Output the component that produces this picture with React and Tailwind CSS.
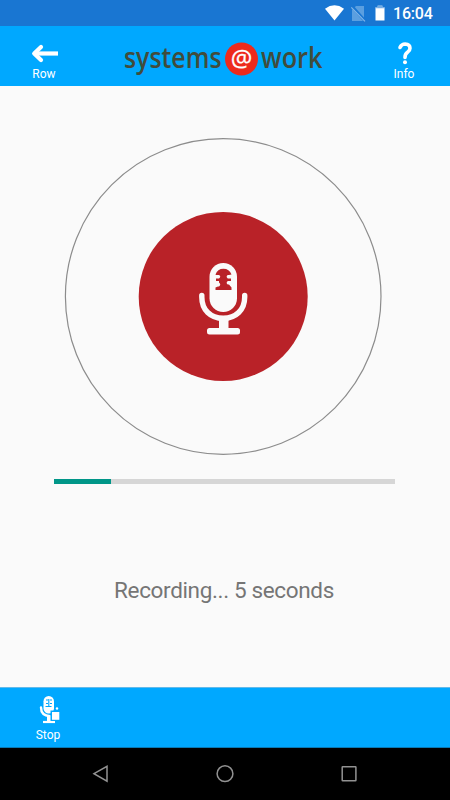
function StatusBar() {
  return (
    <div className="flex h-[26px] shrink-0 items-center bg-[#1976d2] pl-[324px] text-white">
      <svg className="h-[26px] w-[69px]" viewBox="324 0 69 26">
        <path d="M325 8.7Q334.500 1.900 344 8.700L334.500 20.500Z" fill="#fff" />
        <path d="M356 6h8v15h-12V10z" fill="#5b9fe0" />
        <path d="M352 6.300L365.500 21.500" stroke="#1976d2" strokeWidth="3" />
        <path d="M351.300 7.300L365 21.300" stroke="#83b6e8" strokeWidth="1.200" />
        <path d="M375.500 7.300h2V5.500h5v1.800h2V20.500h-9z" fill="#fff" />
        <path d="M375.500 5h9v2.300h-2V5.500h-5v1.800h-2z" fill="#1976d2" />
        <path d="M377.500 5.500h5v1.800h2v1h-9v-1h2z" fill="#75ade5" />
      </svg>
      <span className="mt-[2px] text-[16px] leading-[26px] font-medium tracking-[-0.2px]">16:04</span>
    </div>
  );
}

function Logo() {
  return (
    <svg className="h-[60px] w-[210px]" viewBox="120 26 210 60" fontFamily="'Open Sans', 'Noto Sans', sans-serif">
      <g fill="#414c3c" fontSize="28" fontWeight="600">
        <g transform="translate(125 67.800) scale(0.860 1)">
          <text textLength="113.400" lengthAdjust="spacingAndGlyphs">systems</text>
        </g>
        <g transform="translate(262 67.800) scale(0.860 1)">
          <text textLength="71.500" lengthAdjust="spacingAndGlyphs">work</text>
        </g>
      </g>
      <circle cx="242.500" cy="59" r="16.500" fill="#ed2a1c" />
      <text x="242.500" y="66.500" textAnchor="middle" fill="#fff" stroke="#fff" strokeWidth="0.300" fontSize="24">@</text>
    </svg>
  );
}

function Header() {
  return (
    <header className="flex h-[60px] shrink-0 justify-between bg-[#00a8ff] text-[12px] leading-[14px] text-white">
      <button className="flex w-[88px] flex-col items-center pt-[16px]">
        <svg className="h-[25px] w-[30px]" viewBox="29 42 30 25" fill="none" stroke="#fff" strokeWidth="4.200">
          <path d="M34 53.500H58" />
          <path d="M41 47L34.200 53.500L41 60" strokeLinecap="round" strokeLinejoin="round" />
        </svg>
        <span>Row</span>
      </button>
      <Logo />
      <button className="mr-[2px] flex w-[88px] flex-col items-center pt-[16px]">
        <svg className="h-[25px] w-[20px]" viewBox="394 42 20 25">
          <path d="M400 47.500Q401.500 44 405.200 44Q410 44.200 410 48.200Q410 50.500 407.500 52.300Q405 54 405 57.500" fill="none" stroke="#fff" strokeWidth="3.600" strokeLinecap="round" />
          <circle cx="405" cy="62.200" r="2" fill="#fff" />
        </svg>
        <span>Info</span>
      </button>
    </header>
  );
}

function Recorder() {
  return (
    <svg className="h-[318px] w-[318px]" viewBox="64 137 318 318">
      <circle cx="223.200" cy="296.500" r="157.800" fill="none" stroke="#8c8c8c" strokeWidth="1.200" />
      <circle cx="223.200" cy="296.500" r="84.500" fill="#b92228" />
      <rect x="209.500" y="263" width="27.500" height="49" rx="13.750" fill="#fafafa" />
      <path d="M215.500 274.500Q217.500 268.700 223.400 268.700Q229.300 268.700 231.500 274.500L229 275H227.800Q225.500 276.700 227.800 278.400H231V281H227.800Q225.500 282.800 227.800 284.600H229L231.500 287.500V290H215.500V287.500L218 286.600H219Q221.500 284.600 219 282.600V281H216V278.400H219Q221.500 276.700 219 275H216Z" fill="#b92228" />
      <path d="M201.800 295.500V297C201.800 310 210.500 318.300 223.200 318.300S244.700 310 244.700 297V295.500" fill="none" stroke="#fafafa" strokeWidth="5.400" strokeLinecap="round" />
      <path d="M219 318h9.500v12h-9.500z" fill="#fafafa" />
      <rect x="207" y="328" width="33" height="6.600" rx="2.500" fill="#fafafa" />
    </svg>
  );
}

function Footer() {
  return (
    <footer className="flex h-[61px] shrink-0 border-t border-[#62b9e9] border-b border-b-[#0879b5] bg-[#00a8ff] text-[12px] leading-[14px] text-white">
      <button className="ml-[4px] flex w-[88px] flex-col items-center pt-[6px]">
        <svg className="h-[34px] w-[26px]" viewBox="35 694 26 34">
          <rect x="43.500" y="696" width="10.500" height="17.500" rx="5.200" fill="#fff" />
          <path d="M46 700h2M50 700h2M46 703.500h2M50 703.500h2M45.500 706.500h6M48.800 699v7" stroke="#00a8ff" strokeWidth="1.100" />
          <path d="M41 707.500Q41 715.500 50 716.300" fill="none" stroke="#fff" strokeWidth="2.400" strokeLinecap="round" />
          <path d="M47 716h4v5h-4z" fill="#fff" />
          <path d="M43 722H55" stroke="#fff" strokeWidth="2.200" />
          <path d="M50.500 710.500h10v10.500h-10z" fill="#00a8ff" />
          <path d="M52 712h7.300v7.800h-7.300z" fill="#fff" />
          <circle cx="57" cy="708.500" r="1.200" fill="#fff" />
        </svg>
        <span>Stop</span>
      </button>
    </footer>
  );
}

function NavigationBar() {
  return (
    <nav className="flex h-[52px] shrink-0 items-center justify-between bg-black px-[91px]">
      <svg className="h-[20px] w-[20px]" viewBox="91 764 20 20" fill="none" stroke="#929292" strokeWidth="1.500">
        <path d="M94 773.700L107 766.300V781.200Z" />
      </svg>
      <svg className="h-[20px] w-[20px]" viewBox="215 764 20 20" fill="none" stroke="#929292" strokeWidth="1.500">
        <circle cx="225" cy="773.700" r="7.900" />
      </svg>
      <svg className="h-[20px] w-[20px]" viewBox="339 764 20 20" fill="none" stroke="#929292" strokeWidth="1.500">
        <rect x="342.200" y="766.700" width="13.700" height="14" rx="0.500" />
      </svg>
    </nav>
  );
}

export default function App() {
  return (
    <div className="flex h-[800px] w-[450px] flex-col overflow-hidden bg-[#fafafa] font-['Roboto',sans-serif]">
      <StatusBar />
      <Header />
      <main className="flex h-[601px] shrink-0 flex-col pt-[51px]">
        <div className="flex pl-[64px]">
          <Recorder />
        </div>
        <div className="mt-[24px] ml-[54.400px] h-[5px] w-[341px] bg-[#d6d6d6]">
          <div className="h-full w-[57px] bg-[#009688]" />
        </div>
        <p className="mt-[91px] pr-[2px] text-center text-[22.500px] leading-[30px] tracking-[-0.35px] text-[#757575]">Recording... 5 seconds</p>
      </main>
      <Footer />
      <NavigationBar />
    </div>
  );
}
